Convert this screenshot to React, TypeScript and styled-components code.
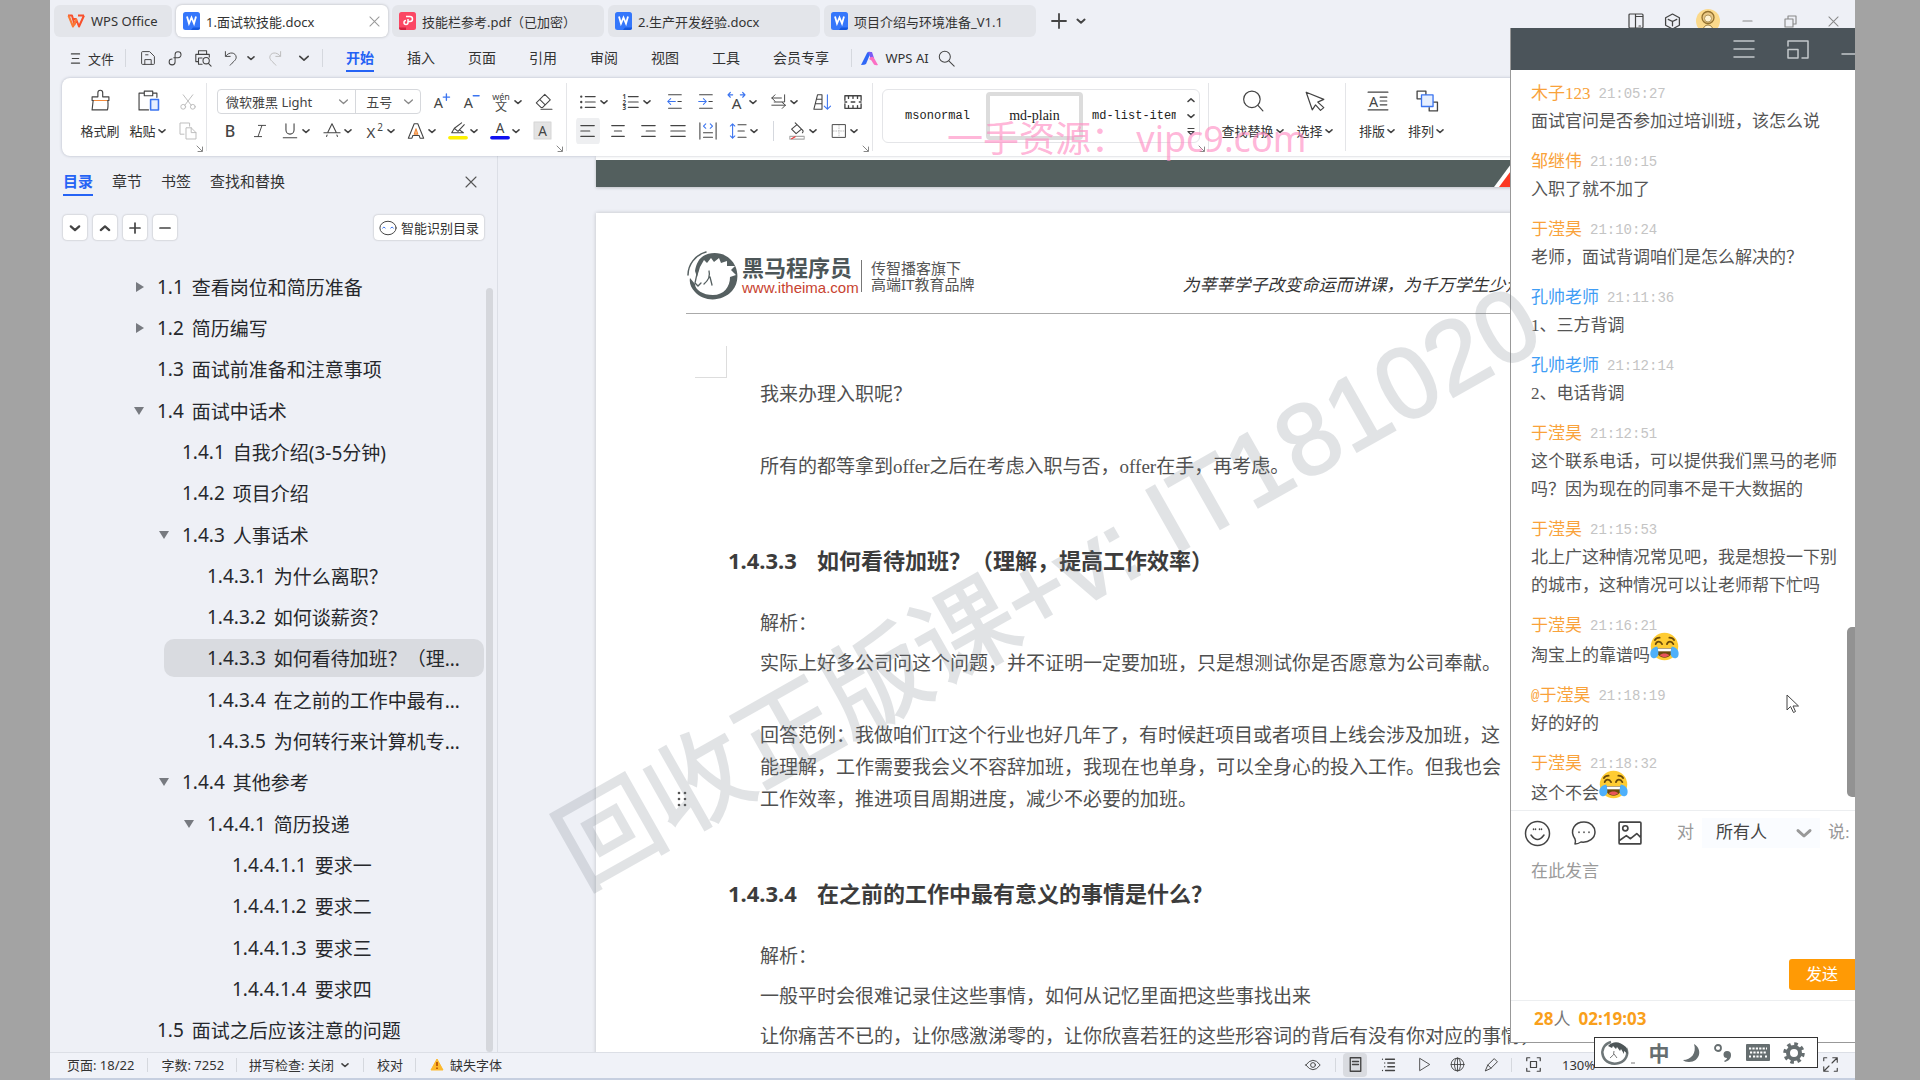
import React from "react";
import styled, { createGlobalStyle, css } from "styled-components";

const UI = `"Noto Sans", "Noto Sans CJK SC", sans-serif`;
const DOC = `"Liberation Serif", "Noto Sans CJK SC", serif`;

const Global = createGlobalStyle`
  * { box-sizing: border-box; }
  body { margin: 0; background: #a3a3a3; font-family: ${UI}; color: #333; }
  button, select, textarea { font: inherit; color: inherit; border: 0; background: none; padding: 0; margin: 0; }
  button { cursor: pointer; }
  h2, p, ul, ol { margin: 0; padding: 0; list-style: none; }
  svg { display: block; flex: none; overflow: visible; }
`;

const Desktop = styled.div`
  height: 100vh;
  padding: 0 65px 0 50px;
  background: #a3a3a3;
`;
const Window = styled.div`
  position: relative;
  display: flex;
  flex-direction: column;
  height: 100%;
  overflow: hidden;
  background: #eef0f6;
`;

/* ---------- icons ---------- */
type IconProps = { children?: React.ReactNode; w?: number; h?: number; box?: string; color?: string; sw?: number };
const Icon = ({ children, w = 20, h = w, box = "0 0 20 20", color = "#444", sw = 1.2 }: IconProps) => (
  <svg width={w} height={h} viewBox={box} fill="none" stroke={color} strokeWidth={sw} strokeLinecap="round" strokeLinejoin="round" aria-hidden="true">
    {children}
  </svg>
);
const Caret = ({ up = false, size = 10, color = "#444", sw = 1.6 }: { up?: boolean; size?: number; color?: string; sw?: number }) => (
  <Icon w={size} box="0 0 10 10" color={color} sw={sw}>
    <path d={up ? "M2 6.5 5 3.8 8 6.5" : "M2 3.8 5 6.5 8 3.8"} />
  </Icon>
);
const Cross = ({ size = 12, color = "#555" }: { size?: number; color?: string }) => (
  <Icon w={size} box="0 0 12 12" color={color} sw={1.1}><path d="M1 1 11 11M11 1 1 11" /></Icon>
);
const Letter = ({ x = 10, y = 16, size = 16, fill = "#444", weight = 400, t = "A" }: { x?: number; y?: number; size?: number; fill?: string; weight?: number; t?: string }) => (
  <text x={x} y={y} fontSize={size} fill={fill} stroke="none" fontWeight={weight} textAnchor="middle" fontFamily="Noto Sans, Noto Sans CJK SC, sans-serif">{t}</text>
);
const BLUE = "#3b74f0";
const WordMark = () => (
  <svg width="17" height="18" viewBox="0 0 17 18" aria-hidden="true">
    <rect width="17" height="18" rx="2.5" fill="#3577fb" />
    <path d="M8 18h6.500a2.500 2.500 0 0 0 2.500-2.500H10z" fill="#1557dd" />
    <path d="M4 4.500 6 11.500 8.500 5.500 11 11.500 13 4.500" fill="none" stroke="#fff" strokeWidth="1.800" />
  </svg>
);
const PdfMark = () => (
  <svg width="17" height="18" viewBox="0 0 17 18" aria-hidden="true">
    <rect width="17" height="18" rx="2.5" fill="#fb4764" />
    <path d="M0 15.500h7v2.500H2.500A2.500 2.500 0 0 1 0 15.500z" fill="#d3203f" />
    <path d="M7 4.500h4a2.300 2.300 0 0 1 0 5H8.500M9 7v3.500a2 2 0 1 1-2-2" fill="none" stroke="#fff" strokeWidth="1.500" />
  </svg>
);
const WpsMark = () => (
  <svg width="18" height="14" viewBox="0 0 18 14" aria-hidden="true">
    <path d="M1 1.500h4l2.500 9L9.500 5M17 1.500l-5 11L9 5H5.500M11 1.500h6" fill="none" stroke="#f8502c" strokeWidth="2" strokeLinejoin="round" />
    <path d="M1.500 1.500 6 12.500 9.500 5" fill="none" stroke="#fb7a35" strokeWidth="2" strokeLinejoin="round" />
  </svg>
);
const Laughing = styled.svg`
  display: inline-block;
  vertical-align: baseline;
  width: 29px;
  height: 29px;
  margin: -8px 0 0;
`;
const Joy = () => (
  <Laughing viewBox="0 0 36 36" role="img" aria-label="笑哭">
    <circle cx="18" cy="18" r="17" fill="#ffcc33" />
    <path d="M8 20h20c0 8-4 12-10 12S8 28 8 20z" fill="#6b4a0a" />
    <path d="M9.500 20.500h17v3.500h-17z" fill="#fff" />
    <path d="M12 29c3-3 9-3 12 0-3 3-9 3-12 0z" fill="#e8555a" />
    <path d="M7 15c1.500-4 6-4 8 0M21 15c1.500-4 6-4 8 0M6 10c1-2 3-3 6-3M30 10c-1-2-3-3-6-3" fill="none" stroke="#6b4a0a" strokeWidth="2.200" strokeLinecap="round" />
    <path d="M9 18C2 19-1 25 1 30c2 4 8 3 9-1 1-3 0-8-1-11zM27 18c7 1 10 7 8 12-2 4-8 3-9-1-1-3 0-8 1-11z" fill="#4fb0fa" />
  </Laughing>
);

/* ---------- title bar ---------- */
const TitleBar = styled.header`
  display: flex;
  align-items: center;
  height: 44px;
  padding: 0 0 2px 4px;
  flex: none;
`;
const TabList = styled.nav`
  display: flex;
  gap: 4px;
`;
const FileTab = styled.button<{ $w: number; $active?: boolean; $home?: boolean }>`
  display: flex;
  align-items: center;
  gap: 6px;
  width: ${(p) => p.$w}px;
  height: 32px;
  padding: 0 8px 0 ${(p) => (p.$home ? 13 : 7)}px;
  border-radius: 6px;
  font-size: 13px;
  white-space: nowrap;
  text-align: left;
  background: ${(p) => (p.$active ? "#fff" : "#e3e5ea")};
  box-shadow: ${(p) => (p.$active ? "0 0 3px rgba(0,0,0,.25)" : "none")};
  span { flex: 1; }
`;
const NewTab = styled.div`
  display: flex;
  gap: 8px;
  padding-left: 15px;
  button { display: flex; align-items: center; }
`;
const WindowControls = styled.div`
  display: flex;
  margin-left: auto;
`;
const Control = styled.button<{ $w: number }>`
  display: flex;
  justify-content: center;
  align-items: center;
  width: ${(p) => p.$w}px;
  height: 32px;
`;

/* ---------- menu ---------- */
const MenuRow = styled.div`
  display: flex;
  align-items: center;
  height: 28px;
  flex: none;
  padding-left: 18px;
`;
const MenuButton = styled.button<{ $w?: number }>`
  display: flex;
  align-items: center;
  justify-content: center;
  gap: 7px;
  width: ${(p) => (p.$w ? `${p.$w}px` : "auto")};
  height: 28px;
  font-size: 13px;
  white-space: nowrap;
`;
const Rule = styled.span<{ $m?: number; $h?: number }>`
  width: 1px;
  height: ${(p) => p.$h ?? 18}px;
  margin: 0 ${(p) => p.$m ?? 0}px;
  background: #d5d8de;
  flex: none;
`;
const MenuTabs = styled.nav`
  display: flex;
  gap: 33px;
  margin: 0 22px 0 20px;
`;
const MenuTab = styled.button<{ $active?: boolean }>`
  height: 28px;
  font-size: 14px;
  white-space: nowrap;
  border-bottom: 2px solid transparent;
  ${(p) => p.$active && css`color: #2563f5; font-weight: 700; border-color: #2563f5;`}
`;

/* ---------- ribbon ---------- */
const Ribbon = styled.section`
  display: flex;
  flex: none;
  height: 78px;
  margin: 6px 0 0 12px;
  background: #fff;
  border-radius: 8px 0 0 8px;
  box-shadow: 0 0 3px rgba(40, 50, 80, 0.3);
  z-index: 1;
`;
const Group = styled.div<{ $w?: number; $pad?: number }>`
  position: relative;
  display: flex;
  flex: none;
  width: ${(p) => (p.$w ? `${p.$w}px` : "auto")};
  padding: 6px 0 4px ${(p) => p.$pad ?? 0}px;
  &:not(:last-child)::after {
    content: "";
    position: absolute;
    right: 0;
    top: 5px;
    bottom: 5px;
    width: 1px;
    background: #e4e5e8;
  }
`;
const Launcher = styled.button`
  position: absolute;
  right: 3px;
  bottom: 3px;
`;
const Rows = styled.div`
  display: flex;
  flex-direction: column;
  gap: 2px;
  padding-top: 4px;
`;
const Row = styled.div<{ $gap?: number }>`
  display: flex;
  align-items: center;
  gap: ${(p) => p.$gap ?? 0}px;
  height: 27px;
`;
const Tool = styled.button<{ $drop?: boolean; $on?: boolean }>`
  display: flex;
  align-items: center;
  justify-content: center;
  gap: 2px;
  width: ${(p) => (p.$drop ? 42 : 30)}px;
  height: 26px;
  padding: 0 3px;
  background: ${(p) => (p.$on ? "#eeeff1" : "none")} content-box;
  border-radius: 5px;
`;
const BigTool = styled.button<{ $w: number }>`
  display: flex;
  flex-direction: column;
  align-items: center;
  justify-content: space-between;
  width: ${(p) => p.$w}px;
  height: 56px;
  padding-top: 6px;
  font-size: 13px;
  line-height: 18px;
  span { display: flex; align-items: center; gap: 1px; white-space: nowrap; }
`;
const FontBox = styled.div`
  display: flex;
  width: 204px;
  height: 25px;
  margin-right: 5px;
  margin-left: 2px;
  border: 1px solid #d6d8dc;
  border-radius: 4px;
`;
const Field = styled.label<{ $w: number }>`
  display: flex;
  align-items: center;
  width: ${(p) => p.$w}px;
  padding: 0 5px 0 8px;
  & + & { border-left: 1px solid #d6d8dc; padding-left: 10px; }
  select { appearance: none; flex: 1; min-width: 0; font-size: 13px; outline: 0; color: #444; }
`;
const Gallery = styled.div`
  display: flex;
  align-items: center;
  width: 318px;
  height: 54px;
  margin: 5px 0 0 9px;
  padding-left: 6px;
  border: 1px solid #e4e5e8;
  border-radius: 6px;
`;
const StyleCard = styled.button<{ $on?: boolean; $serif?: boolean }>`
  width: 97px;
  height: 48px;
  overflow: hidden;
  white-space: nowrap;
  border: ${(p) => (p.$on ? "4px solid #dcdcdc" : "0")};
  border-radius: 4px;
  font: ${(p) => (p.$serif ? `14px "Liberation Serif", serif` : `12px "Liberation Mono", monospace`)};
  color: #222;
`;
const ClipCard = styled(StyleCard)`
  width: 93px;
  padding-left: 9px;
  text-align: left;
`;
const GalleryArrows = styled.div`
  display: flex;
  flex-direction: column;
  justify-content: space-between;
  height: 50px;
  margin-left: 10px;
  padding: 4px 0;
`;

/* ---------- body ---------- */
const Body = styled.div`
  display: flex;
  flex: 1;
  min-height: 0;
`;
const Sidebar = styled.aside`
  position: relative;
  display: flex;
  flex-direction: column;
  width: 448px;
  flex: none;
  border-right: 1px solid #dcdfe6;
`;
const SideTabs = styled.div`
  display: flex;
  align-items: center;
  gap: 19px;
  height: 28px;
  margin: 12px 20px 0 13px;
  button:last-child { margin-left: auto; }
`;
const SideTab = styled.button<{ $active?: boolean }>`
  height: 28px;
  font-size: 15px;
  line-height: 26px;
  border-bottom: 2px solid transparent;
  ${(p) => p.$active && css`color: #2563f5; font-weight: 700; border-color: #2563f5;`}
`;
const SideTools = styled.div`
  display: flex;
  gap: 6px;
  margin: 19px 13px 0 13px;
`;
const Chip = styled.button`
  display: flex;
  align-items: center;
  justify-content: center;
  gap: 4px;
  min-width: 24px;
  height: 25px;
  background: #fff;
  border-radius: 4px;
  font-size: 13px;
  box-shadow: 0 0 2px rgba(0, 0, 0, 0.3);
  &:last-child { margin-left: auto; width: 110px; }
`;
const Tree = styled.ul`
  flex: 1;
  min-height: 0;
  display: grid;
  grid-auto-rows: 1fr;
  align-items: center;
  margin: 26px 13px 1px 13px;
`;
const Node = styled.li<{ $level: number; $active?: boolean }>`
  display: flex;
  align-items: center;
  height: 38px;
  margin-left: ${(p) => p.$level * 25 + (p.$active ? 51 : 0)}px;
  padding-left: ${(p) => (p.$active ? 19 : 70)}px;
  padding-right: 12px;
  border-radius: 10px;
  background: ${(p) => (p.$active ? "#d9dbe0" : "none")};
  color: #26282c;
  font-size: 19px;
  white-space: nowrap;
  min-width: 0;
`;
const Twist = styled.span`
  display: flex;
  width: 24px;
  flex: none;
`;
const NodeNo = styled.span`
  margin-right: 8px;
`;
const NodeTitle = styled.span`
  overflow: hidden;
  text-overflow: ellipsis;
`;
const Scroll = styled.span`
  position: absolute;
  right: 4px;
  top: 132px;
  bottom: 0;
  width: 7px;
  border-radius: 4px;
  background: #d5d7dc;
`;

/* ---------- document ---------- */
const Canvas = styled.main`
  flex: 1;
  min-width: 0;
  overflow: hidden;
  padding-left: 98px;
`;
const PageEnd = styled.div`
  position: relative;
  height: 31px;
  margin-bottom: 26px;
  border-top: 4px solid #fff;
  background: #535f5e;
  box-shadow: 0 1px 3px rgba(0, 0, 0, 0.2);
`;
const Flash = styled.svg`
  position: absolute;
  right: 325px;
  top: 0;
`;
const Page = styled.article`
  background: #fff;
  min-height: 1400px;
  padding-top: 38px;
  box-shadow: 0 0 4px rgba(0, 0, 0, 0.2);
`;
const PageHeader = styled.div`
  display: flex;
  align-items: center;
  height: 63px;
  margin-left: 90px;
  padding-bottom: 12px;
  border-bottom: 1px solid #aaa;
  white-space: nowrap;
`;
const Brand = styled.div`
  width: 112px;
  margin-left: 4px;
  strong { display: block; font-size: 22px; line-height: 24px; color: #4c5658; }
  a { display: block; font: 15px/18px "Liberation Sans", sans-serif; color: #c8432f; text-decoration: none; }
`;
const Tagline = styled.div`
  margin-left: 7px;
  padding-left: 9px;
  border-left: 1px solid #777;
  font-size: 15px;
  line-height: 16px;
  color: #555;
`;
const Slogan = styled.div`
  margin: 16px 0 0 208px;
  font: italic 17px/20px "Noto Sans CJK SC", sans-serif;
  color: #333;
`;
const MarginMark = styled.div`
  width: 32px;
  height: 32px;
  margin: 32px 0 0 99px;
  border: solid #ddd;
  border-width: 0 1px 1px 0;
`;
const Copy = styled.div`
  padding: 1px 0 0 164px;
  font: 19px/32px ${DOC};
  color: #505050;
  white-space: nowrap;
  p + p { margin-top: 8px; }
  p.spaced { margin-top: 40px; }
`;
const Heading = styled.h2`
  display: flex;
  gap: 20px;
  margin: 61px 0 32px -32px;
  font: 700 22px/32px ${UI};
  color: #3c3c3c;
`;
const Answer = styled.p`
  position: relative;
`;
const Handle = styled.svg`
  position: absolute;
  left: -83px;
  bottom: 9px;
`;

/* ---------- status bar ---------- */
const Status = styled.footer`
  display: flex;
  align-items: center;
  flex: none;
  height: 28px;
  padding: 0 0 2px 17px;
  border-top: 1px solid #dcdfe6;
  border-bottom: 2px solid #c6cfe0;
  font-size: 13px;
  background: #f0f2f8;
  white-space: nowrap;
`;
const StatusText = styled.button`
  display: flex;
  align-items: center;
  gap: 6px;
`;
const StatusTools = styled.div`
  display: flex;
  align-items: center;
  margin-left: auto;
  padding-right: 10px;
`;
const StatusTool = styled.button<{ $w: number; $on?: boolean }>`
  display: flex;
  justify-content: center;
  align-items: center;
  width: ${(p) => p.$w}px;
  height: 24px;
  border-radius: 4px;
  background: ${(p) => (p.$on ? "#d9dbe0" : "none")};
`;
const Zoom = styled.span`
  width: 266px;
  padding-left: 13px;
`;

/* ---------- chat window ---------- */
const Chat = styled.section`
  position: absolute;
  right: 0;
  top: 28px;
  bottom: 37px;
  z-index: 2;
  display: flex;
  flex-direction: column;
  width: 345px;
  background: #fff;
  border: solid #999;
  border-width: 0 0 1px 1px;
`;
const ChatBar = styled.div`
  display: flex;
  justify-content: flex-end;
  align-items: center;
  gap: 32px;
  height: 42px;
  flex: none;
  overflow: hidden;
  background: #4b545a;
`;
const Messages = styled.ol`
  position: relative;
  flex: 1;
  min-height: 0;
  overflow: hidden;
  padding: 10px 8px 0 20px;
  font: 17px/28px ${DOC};
  color: #555;
`;
const Message = styled.li`
  margin-bottom: 12px;
`;
const Who = styled.div<{ $teacher?: boolean }>`
  display: flex;
  color: ${(p) => (p.$teacher ? "#3f9df5" : "#f9a23a")};
  small { font: 14px/28px "Liberation Mono", monospace; }
  time { margin-left: 8px; font: 14px/28px "Liberation Mono", monospace; color: #c4c4c4; }
`;
const ChatScroll = styled.span`
  position: absolute;
  right: 0;
  top: 557px;
  width: 8px;
  height: 170px;
  border-radius: 5px 0 0 5px;
  background: #929292;
`;
const Compose = styled.div`
  display: flex;
  flex-direction: column;
  flex: none;
  border-top: 1px solid #eceef0;
  font: 17px/28px ${DOC};
  textarea { height: 104px; padding: 3px 20px; resize: none; outline: 0; color: #555; }
  textarea::placeholder { color: #9a9a9a; }
`;
const ComposeTools = styled.div`
  display: flex;
  align-items: center;
  height: 44px;
  padding-left: 13px;
  color: #999;
  > button { margin-right: 20px; }
`;
const Audience = styled.label`
  display: flex;
  align-items: center;
  gap: 8px;
  margin-left: 14px;
`;
const AudienceBox = styled.span`
  display: flex;
  align-items: center;
  width: 118px;
  height: 30px;
  padding: 0 6px 0 14px;
  background: #fafcff;
  select { appearance: none; flex: 1; min-width: 0; outline: 0; color: #444; }
`;
const Send = styled.button`
  align-self: flex-end;
  width: 66px;
  height: 31px;
  margin-bottom: 10px;
  background: #ff9a05;
  color: #fff;
  font-size: 16px;
  border-radius: 3px 0 0 3px;
`;
const ChatFoot = styled.div`
  display: flex;
  gap: 8px;
  height: 42px;
  padding-left: 23px;
  border-top: 1px solid #eceef0;
  font-size: 17px;
  line-height: 36px;
  color: #777;
  flex: none;
  b { color: #f9a01b; }
`;

/* ---------- overlays ---------- */
const Stamp = styled.div`
  position: absolute;
  left: 516px;
  top: 789px;
  z-index: 3;
  font: 102px/140px "Liberation Sans", "Noto Sans CJK SC", sans-serif;
  color: #6e7882;
  -webkit-text-stroke: 2px #6e7882;
  opacity: 0.2;
  white-space: nowrap;
  transform-origin: left center;
  transform: rotate(-29.5deg);
  pointer-events: none;
`;
const PinkNote = styled.div`
  position: absolute;
  left: 897px;
  top: 114px;
  z-index: 3;
  font-size: 36px;
  line-height: 50px;
  color: rgba(255, 140, 195, 0.65);
  white-space: nowrap;
  pointer-events: none;
`;
const Ime = styled.div`
  position: absolute;
  right: 37px;
  bottom: 12px;
  z-index: 4;
  display: flex;
  align-items: center;
  justify-content: space-between;
  width: 224px;
  height: 31px;
  padding: 0 12px 0 6px;
  background: #fff;
  border: 1px solid #333;
  font-size: 21px;
  line-height: 28px;
  font-weight: 700;
  color: #666e70;
  button { display: flex; }
`;
const Pointer = styled.svg`
  position: absolute;
  right: 55px;
  top: 694px;
  z-index: 4;
`;

const toc: [number, string, string, ("open" | "shut")?][] = [
  [0, "1.1", "查看岗位和简历准备", "shut"],
  [0, "1.2", "简历编写", "shut"],
  [0, "1.3", "面试前准备和注意事项"],
  [0, "1.4", "面试中话术", "open"],
  [1, "1.4.1", "自我介绍(3-5分钟)"],
  [1, "1.4.2", "项目介绍"],
  [1, "1.4.3", "人事话术", "open"],
  [2, "1.4.3.1", "为什么离职？"],
  [2, "1.4.3.2", "如何谈薪资？"],
  [2, "1.4.3.3", "如何看待加班？（理解，提高工作效率）"],
  [2, "1.4.3.4", "在之前的工作中最有意义的事情是什么？"],
  [2, "1.4.3.5", "为何转行来计算机专业？需要哪些准备"],
  [1, "1.4.4", "其他参考", "open"],
  [2, "1.4.4.1", "简历投递", "open"],
  [3, "1.4.4.1.1", "要求一"],
  [3, "1.4.4.1.2", "要求二"],
  [3, "1.4.4.1.3", "要求三"],
  [3, "1.4.4.1.4", "要求四"],
  [0, "1.5", "面试之后应该注意的问题"],
];

const chat: { who: string; at: string; text: string; teacher?: boolean; joy?: boolean; mention?: boolean }[] = [
  { who: "木子123", at: "21:05:27", text: "面试官问是否参加过培训班，该怎么说" },
  { who: "邹继伟", at: "21:10:15", text: "入职了就不加了" },
  { who: "于滢昊", at: "21:10:24", text: "老师，面试背调咱们是怎么解决的？" },
  { who: "孔帅老师", at: "21:11:36", text: "1、三方背调", teacher: true },
  { who: "孔帅老师", at: "21:12:14", text: "2、电话背调", teacher: true },
  { who: "于滢昊", at: "21:12:51", text: "这个联系电话，可以提供我们黑马的老师吗？因为现在的同事不是干大数据的" },
  { who: "于滢昊", at: "21:15:53", text: "北上广这种情况常见吧，我是想投一下别的城市，这种情况可以让老师帮下忙吗" },
  { who: "于滢昊", at: "21:16:21", text: "淘宝上的靠谱吗", joy: true },
  { who: "于滢昊", at: "21:18:19", text: "好的好的", mention: true },
  { who: "于滢昊", at: "21:18:32", text: "这个不会", joy: true },
];

const Lines = ({ a = [3, 17], b = [3, 17] }: { a?: number[]; b?: number[] }) => (
  <path d={`M${a[0]} 4H${a[1]}M${b[0]} 10H${b[1]}M${a[0]} 16H${a[1]}`} />
);

function TopBars() {
  return (
    <>
      <TitleBar>
        <TabList>
          <FileTab $w={118} $home><WpsMark /><span>WPS Office</span></FileTab>
          <FileTab $w={212} $active><WordMark /><span>1.面试软技能.docx</span><Cross size={11} color="#999" /></FileTab>
          <FileTab $w={212}><PdfMark /><span>技能栏参考.pdf（已加密）</span></FileTab>
          <FileTab $w={212}><WordMark /><span>2.生产开发经验.docx</span></FileTab>
          <FileTab $w={212}><WordMark /><span>项目介绍与环境准备_V1.1</span></FileTab>
        </TabList>
        <NewTab>
          <button aria-label="新建"><Icon w={16} box="0 0 16 16" sw={1.8}><path d="M8 1V15M1 8H15" /></Icon></button>
          <button aria-label="更多标签"><Caret size={12} /></button>
        </NewTab>
        <WindowControls>
          <Control $w={36} aria-label="侧栏"><Icon w={16} box="0 0 16 16"><path d="M2 1H14a1 1 0 0 1 1 1V14a1 1 0 0 1-1 1H2a1 1 0 0 1-1-1V2a1 1 0 0 1 1-1zM7.500 1V15M7.500 3.500H15M11 13H12.500" /></Icon></Control>
          <Control $w={36} aria-label="应用"><Icon w={17} box="0 0 16 16" sw={1.2}><path d="M8 1 14.500 4.500V11.500L8 15 1.500 11.500V4.500zM4 6 8 8 12 6M8 8V12" /></Icon></Control>
          <Control $w={36} aria-label="账户">
            <svg width="24" height="24" viewBox="0 0 24 24" aria-hidden="true">
              <circle cx="12" cy="12" r="12" fill="#fbd98b" />
              <circle cx="12" cy="8.500" r="6" fill="#e9c886" stroke="#93712f" strokeWidth="1.300" />
              <circle cx="12" cy="9.500" r="3.500" fill="#fff3d4" stroke="#a58646" strokeWidth=".8" />
              <path d="M7 22c0-8 10-8 10 0" fill="#fff3d4" stroke="#93712f" />
            </svg>
          </Control>
          <Control $w={43} aria-label="最小化"><Icon w={11} box="0 0 11 11" color="#888"><path d="M1 5H10" /></Icon></Control>
          <Control $w={43} aria-label="还原"><Icon w={13} box="0 0 13 13" color="#888" sw={1.1}><path d="M1 4H9V12H1zM4 4V1H12V9H9" /></Icon></Control>
          <Control $w={43} aria-label="关闭"><Cross color="#888" size={11} /></Control>
        </WindowControls>
      </TitleBar>
      <MenuRow>
        <MenuButton $w={48}><Icon w={11} box="0 0 11 12"><path d="M1 1H10M2 6H9M1 11H10" /></Icon>文件</MenuButton>
        <Rule $m={9} />
        <MenuButton $w={26} aria-label="保存"><Icon w={16}><path d="M2 3a1 1 0 0 1 1-1H12L18 8V17a1 1 0 0 1-1 1H3a1 1 0 0 1-1-1zM6 18V12H14V18M7 6H10" /></Icon></MenuButton>
        <MenuButton $w={28} aria-label="输出"><Icon w={17}><path d="M8 9H13a3.500 3.500 0 1 0-3.500-3.500V14A3.500 3.500 0 1 1 6 10.500" /></Icon></MenuButton>
        <MenuButton $w={28} aria-label="打印预览"><Icon w={18}><path d="M5 6V2H14V6M5 14H2V6H17V9M6 10H9M5 17V10M5 17H9" /><circle cx="13.500" cy="13" r="3.500" /><path d="M16 16 19 19" /></Icon></MenuButton>
        <MenuButton $w={44} aria-label="撤销"><Icon w={16}><path d="M3 2V8H9M3.500 7.500C8 1.500 16 3 16.500 9 16.500 13 12 15 9 19" /></Icon><Caret /></MenuButton>
        <MenuButton $w={28} aria-label="恢复"><Icon w={16} color="#bbb"><path d="M17 2V8H11M16.500 7.500C12 1.500 4 3 3.500 9 3.500 13 8 15 11 19" /></Icon></MenuButton>
        <MenuButton $w={30} aria-label="更多命令"><Caret size={14} sw={1.200} /></MenuButton>
        <Rule $m={3} />
        <MenuTabs>
          <MenuTab $active>开始</MenuTab><MenuTab>插入</MenuTab><MenuTab>页面</MenuTab><MenuTab>引用</MenuTab><MenuTab>审阅</MenuTab><MenuTab>视图</MenuTab><MenuTab>工具</MenuTab><MenuTab>会员专享</MenuTab>
        </MenuTabs>
        <Rule />
        <MenuButton $w={86}>
          <svg width="17" height="15" viewBox="0 0 17 15" aria-hidden="true">
            <path d="M0 14 6 2Q7 0 10 1L5 13Q4 14 0 14z" fill="#2f67f6" />
            <path d="M7 1 11 1 13 7 9.500 7z" fill="#7a5cf5" />
            <path d="M8 8Q11 4 13 7L17 14Q13 15 12 12 11 9 8 8z" fill="#fb6fc4" />
          </svg>
          WPS AI
        </MenuButton>
        <MenuButton aria-label="搜索"><Icon w={17}><circle cx="8" cy="8" r="6.500" /><path d="M13 13 19 19" /></Icon></MenuButton>
      </MenuRow>
    </>
  );
}

const Corner = () => (
  <Launcher aria-label="更多设置"><Icon w={8} box="0 0 8 8" color="#888" sw={1}><path d="M1 1 6 6M6.500 2V6.500H2" /></Icon></Launcher>
);

function RibbonBar() {
  return (
    <Ribbon>
      <Group $w={145} $pad={15}>
        <BigTool $w={46}><Icon w={21} sw={1.100}><path d="M2 6.500H7.500V2.500a2.300 2.300 0 0 1 4.600 0V6.500H18V10H2zM3 10 2 19H16.500Q17.500 17 17 10" /><path d="M4 10H16" stroke="#f08a3c" /></Icon><span>格式刷</span></BigTool>
        <BigTool $w={50}><Icon w={21} sw={1.100}><path d="M6 3H1V19H10M14 3H18V7M6 1H14V5.500H6z" /><path d="M12 9H19.500V19H12z" stroke={BLUE} fill="#e6efff" strokeWidth="1.500" /></Icon><span>粘贴<Caret /></span></BigTool>
        <Rows>
          <Row><Tool aria-label="剪切"><Icon w={16} color="#bbb"><path d="M4 1 14 14M16 1 6 14" /><circle cx="4" cy="16" r="3" /><circle cx="16" cy="16" r="3" /></Icon></Tool></Row>
          <Row><Tool aria-label="复制"><Icon w={16} color="#bbb"><path d="M5 14H0V0H12V4M8 6H14L20 12V20H8zM14 6V12H20" /></Icon></Tool></Row>
        </Rows>
        <Corner />
      </Group>
      <Group $w={360} $pad={8}>
        <Rows>
          <Row>
            <FontBox>
              <Field $w={138}><select aria-label="字体"><option>微软雅黑 Light</option></select><Caret size={13} color="#888" sw={1} /></Field>
              <Field $w={65}><select aria-label="字号"><option>五号</option></select><Caret size={13} color="#888" sw={1} /></Field>
            </FontBox>
            <Tool aria-label="增大字号"><Icon w={18}><Letter x={7} y={17} size={16} /><path d="M16 1V8M12.500 4.500H19.500" stroke={BLUE} strokeWidth="1.500" /></Icon></Tool>
            <Tool aria-label="减小字号"><Icon w={18}><Letter x={7} y={17} size={16} /><path d="M12.500 3H19" stroke={BLUE} strokeWidth="1.500" /></Icon></Tool>
            <Tool $drop aria-label="拼音指南"><Icon><Letter y={8} size={9} t="wén" /><Letter y={19} size={12} t="文" /></Icon><Caret /></Tool>
            <Tool aria-label="清除格式"><Icon w={17}><path d="M7 17 1.500 11.500 11.500 1.500 18 8 9 17zM5.500 7.500 12 14M7 19H20" /></Icon></Tool>
          </Row>
          <Row>
            <Tool aria-label="加粗"><Icon><Letter weight={500} y={16} size={16} t="B" /></Icon></Tool>
            <Tool aria-label="倾斜"><Icon w={16}><path d="M8 3H17M3 17H12M12.500 3 7.500 17" /></Icon></Tool>
            <Tool $drop aria-label="下划线"><Icon w={18}><path d="M5.500 2V9a4.500 4.500 0 0 0 9 0V2M2.500 17.500H17.500" /></Icon><Caret /></Tool>
            <Tool $drop aria-label="删除线"><Icon w={18}><path d="M10 2 5.500 11M10 2 14.500 11M4 16 4.500 14.500M16 16 15.500 14.500M1 12H19" /></Icon><Caret /></Tool>
            <Tool $drop aria-label="上标"><Icon><Letter x={7} y={17} size={15} t="X" /><Letter x={16} y={10} size={10} t="2" /></Icon><Caret /></Tool>
            <Tool $drop aria-label="文字效果"><Icon w={18}><path d="M1.500 18 8 2H12L18.500 18H14.500L13.500 15H6.500L5.500 18z" /><path d="M8 13.500 10 7.500 12 13.500z" stroke="#f08a3c" fill="#f9c08f" /></Icon><Caret /></Tool>
            <Tool $drop aria-label="突出显示"><Icon w={18}><path d="M3 12 6 7 10 10.500 17 3M6 7 14 1M3 12H16L12 9" /><path d="M1 17.500H19" stroke="#fdf000" strokeWidth="4" /></Icon><Caret /></Tool>
            <Tool $drop aria-label="字体颜色"><Icon w={18}><Letter y={12} size={15} /><path d="M1 17.500H19" stroke="#1010f0" strokeWidth="4" /></Icon><Caret /></Tool>
            <Tool aria-label="字符底纹"><Icon w={17}><rect width="20" height="20" fill="#e3e3e3" stroke="#d6d6d6" /><Letter y={16} size={16} /></Icon></Tool>
          </Row>
        </Rows>
        <Corner />
      </Group>
      <Group $w={306} $pad={6}>
        <Rows>
          <Row $gap={1}>
            <Tool $drop aria-label="项目符号"><Icon w={18}><path d="M7 4H18M7 10H18M7 16H18" /><path d="M2.500 4V4.010M2.500 10V10.010M2.500 16V16.010" strokeWidth="2.600" /></Icon><Caret /></Tool>
            <Tool $drop aria-label="编号"><Icon w={18}><path d="M7 4H18M7 10H18M7 16H18" /><Letter x={2.500} y={6.500} size={7} t="1" weight={700} /><Letter x={2.500} y={13} size={7} t="2" weight={700} /><Letter x={2.500} y={19} size={7} t="3" weight={700} /></Icon><Caret /></Tool>
            <Tool aria-label="减少缩进"><Icon w={17}><path d="M3 2H18M3 18H18M14 10H18" /><path d="M11 10H2M5.500 6.500 2 10 5.500 13.500" stroke={BLUE} /></Icon></Tool>
            <Tool aria-label="增加缩进"><Icon w={17}><path d="M3 2H18M3 18H18M14 10H18" /><path d="M2 10H11M7.500 6.500 11 10 7.500 13.500" stroke={BLUE} /></Icon></Tool>
            <Tool $drop aria-label="中文版式"><Icon w={19}><Letter y={18} size={16} /><path d="M1 3H6M14 3H19M3.500 .5 1 3 3.500 5.500M16.500 .5 19 3 16.500 5.500" stroke={BLUE} /></Icon><Caret /></Tool>
            <Tool $drop aria-label="换行"><Icon w={16}><path d="M5 1 1 5 5 9M1 5H13M17 1V10H4M1 14H18M14 10.500 18 14 14 18" /></Icon><Caret /></Tool>
            <Tool aria-label="排序"><Icon w={18}><path d="M1 18 5 2H10V18zM4 7H10M3 12H10" /><path d="M16 2V18M12.500 14.500 16 18 19.500 14.500" stroke={BLUE} /></Icon></Tool>
            <Tool aria-label="制表位"><Icon w={18}><path d="M1 8V3H19V8M1 12V17H19V12M5 3V6M10 3V6M15 3V6M5 17V14M10 17V14M15 17V14M1 10H3M17 10H19M8 10H12" strokeWidth="1.500" /></Icon></Tool>
          </Row>
          <Row>
            <Tool $on aria-label="左对齐"><Icon w={18}><Lines a={[2, 17]} b={[2, 12]} /></Icon></Tool>
            <Tool aria-label="居中"><Icon w={18}><Lines a={[3, 17]} b={[6, 14]} /></Icon></Tool>
            <Tool aria-label="右对齐"><Icon w={18}><Lines a={[3, 18]} b={[8, 18]} /></Icon></Tool>
            <Tool aria-label="两端对齐"><Icon w={18}><Lines a={[2, 18]} b={[2, 18]} /></Icon></Tool>
            <Tool aria-label="分散对齐"><Icon w={18}><path d="M1 1V19M19 1V19M5 12H15M5 17H15" /><path d="M7.500 2 5 4.500 7.500 7M12.500 2 15 4.500 12.500 7" stroke={BLUE} /></Icon></Tool>
            <Tool $drop aria-label="行距"><Icon w={18}><path d="M10 3H19M10 10H17M10 17H19" /><path d="M4 2V18M1.500 4.500 4 2 6.500 4.500M1.500 15.500 4 18 6.500 15.500" stroke={BLUE} /></Icon><Caret /></Tool>
            <Rule $m={8} $h={20} />
            <Tool $drop aria-label="底纹"><Icon w={18}><path d="M4 8 10 3 15 8 9 13zM10 3 8 1M15 8Q18 10 16 12" /><path d="M2 16H18V19H2z" stroke="#aaa" /><path d="M4 18.500 8 16.500" stroke="#e33" /></Icon><Caret /></Tool>
            <Tool $drop aria-label="边框"><Icon w={16}><path d="M2 2H18V18H2z" /><path d="M10 3V17M3 10H17" stroke="#bbb" strokeDasharray="1 2" /></Icon><Caret /></Tool>
          </Row>
        </Rows>
        <Corner />
      </Group>
      <Group $w={336}>
        <Gallery>
          <StyleCard>msonormal</StyleCard>
          <StyleCard $on $serif>md-plain</StyleCard>
          <ClipCard>md-list-item</ClipCard>
          <GalleryArrows><Caret up /><Caret /><Icon w={10} box="0 0 10 10"><path d="M2 1.500H8M2 4.500H8L5 7.500z" /></Icon></GalleryArrows>
        </Gallery>
        <Corner />
      </Group>
      <Group $w={137} $pad={6}>
        <BigTool $w={76}><Icon w={22} sw={1.100}><circle cx="9" cy="8.500" r="7.500" /><path d="M14.500 14 19 19" /></Icon><span>查找替换<Caret /></span></BigTool>
        <BigTool $w={48}><Icon w={22} sw={1.100}><path d="M2 2 18 8.500 12.500 11 18 16 15 18.500 10.500 13.500 7.500 18z" /></Icon><span>选择<Caret /></span></BigTool>
      </Group>
      <Group $pad={7}>
        <BigTool $w={49}><Icon w={22} sw={1.100}><path d="M1 2H19M12 6.500H18M12 10H18M12 13.500H18M1 18H19" /><Letter x={6} y={15} size={13} /></Icon><span>排版<Caret /></span></BigTool>
        <BigTool $w={49}><Icon w={22} sw={1.200}><path d="M5 8H1V1H9V4M16 11H19.500V19H12V16" /><path d="M5 4.500H15.500V15H5z" stroke={BLUE} fill="#e6efff" /></Icon><span>排列<Caret /></span></BigTool>
      </Group>
    </Ribbon>
  );
}

function Outline() {
  return (
    <Sidebar>
      <SideTabs>
        <SideTab $active>目录</SideTab><SideTab>章节</SideTab><SideTab>书签</SideTab><SideTab>查找和替换</SideTab>
        <button aria-label="关闭导航"><Cross /></button>
      </SideTabs>
      <SideTools>
        <Chip aria-label="展开"><Caret size={14} /></Chip>
        <Chip aria-label="收起"><Caret size={14} up /></Chip>
        <Chip aria-label="放大"><Icon w={12} box="0 0 12 12" sw={1.700}><path d="M6 1V11M1 6H11" /></Icon></Chip>
        <Chip aria-label="缩小"><Icon w={12} box="0 0 12 12" sw={1.700}><path d="M1 6H11" /></Icon></Chip>
        <Chip><Icon w={18} sw={1.100}><ellipse cx="10" cy="10" rx="9" ry="7.500" /><path d="M4 10Q5.500 7.500 7 10M13 10Q14.500 7.500 16 10" stroke={BLUE} /></Icon>智能识别目录</Chip>
      </SideTools>
      <Tree>
        {toc.map(([level, no, title, state]) => (
          <Node key={no} $level={level} $active={no === "1.4.3.3"}>
            <Twist>
              {state && (
                <svg width="12" height="12" viewBox="0 0 12 12" aria-hidden="true">
                  <path d={state === "open" ? "M1 2H11L6 10z" : "M3 1V11L11 6z"} fill="#777a80" />
                </svg>
              )}
            </Twist>
            <NodeNo>{no}</NodeNo>
            <NodeTitle>{title}</NodeTitle>
          </Node>
        ))}
      </Tree>
      <Scroll />
    </Sidebar>
  );
}

function Document() {
  return (
    <Canvas>
      <PageEnd>
        <Flash width="40" height="27" viewBox="0 0 40 27" aria-hidden="true"><path d="M4 27 24 0H40V27z" fill="#fff" /><path d="M9 27 29 0H40V27z" fill="#fb3822" /></Flash>
      </PageEnd>
      <Page>
        <PageHeader>
          <svg width="52" height="50" viewBox="0 0 52 50" aria-hidden="true">
            <path fillRule="evenodd" fill="#566061" d="M16 6C22 1 36 0 44 8 53 16 54 31 46 40 36 51 18 51 9 41 5 37 3 32 4 27L9 33C9 39 17 44 27 44 38 44 44 36 44 26L50 24 45 19 49 15 41 15 41 10 35 12 33 7 28 11 25 7 21 12 18 9 14 16 11 26 9 20C10 14 12 9 16 6z" />
            <path d="M20 1C9 4 2 14 2 24" fill="none" stroke="#566061" strokeWidth="1.500" strokeLinecap="round" />
            <path d="M12 18 9 32 12 35 15 32M23 20Q25 27 18 33M24 26 26 34" fill="none" stroke="#566061" strokeWidth="1.300" strokeLinecap="round" />
          </svg>
          <Brand><strong>黑马程序员</strong><a href="#itheima">www.itheima.com</a></Brand>
          <Tagline>传智播客旗下<br />高端IT教育品牌</Tagline>
          <Slogan>为莘莘学子改变命运而讲课，为千万学生少走</Slogan>
        </PageHeader>
        <MarginMark />
        <Copy>
          <p>我来办理入职呢？</p>
          <p className="spaced">所有的都等拿到offer之后在考虑入职与否，offer在手，再考虑。</p>
          <Heading><span>1.4.3.3</span>如何看待加班？（理解，提高工作效率）</Heading>
          <p>解析：</p>
          <p>实际上好多公司问这个问题，并不证明一定要加班，只是想测试你是否愿意为公司奉献。</p>
          <Answer className="spaced">
            回答范例：我做咱们IT这个行业也好几年了，有时候赶项目或者项目上线会涉及加班，这<br />
            能理解，工作需要我会义不容辞加班，我现在也单身，可以全身心的投入工作。但我也会<br />
            工作效率，推进项目周期进度，减少不必要的加班。
            <Handle width="10" height="16" viewBox="0 0 10 16" aria-hidden="true">
              {[2, 8, 14].map((y) => <g key={y} fill="#555"><circle cx="2" cy={y} r="1.300" /><circle cx="8" cy={y} r="1.300" /></g>)}
            </Handle>
          </Answer>
          <Heading><span>1.4.3.4</span>在之前的工作中最有意义的事情是什么？</Heading>
          <p>解析：</p>
          <p>一般平时会很难记录住这些事情，如何从记忆里面把这些事找出来</p>
          <p>让你痛苦不已的，让你感激涕零的，让你欣喜若狂的这些形容词的背后有没有你对应的事情，</p>
        </Copy>
      </Page>
    </Canvas>
  );
}

function StatusBar() {
  return (
    <Status>
      <StatusText>页面: 18/22</StatusText><Rule $m={13} $h={14} />
      <StatusText>字数: 7252</StatusText><Rule $m={12} $h={14} />
      <StatusText>拼写检查: 关闭<Caret /></StatusText><Rule $m={13} $h={14} />
      <StatusText>校对</StatusText><Rule $m={12} $h={14} />
      <StatusText>
        <svg width="16" height="13" viewBox="8 0 16 13" aria-hidden="true"><path d="M17 1 23 12H11z" fill="#fdb92c" stroke="#fdb92c" strokeLinejoin="round" /><path d="M17 4V8M17 9.500V11" stroke="#b34a00" strokeWidth="1.600" /></svg>
        缺失字体
      </StatusText>
      <StatusTools>
        <StatusTool $w={31} aria-label="护眼"><Icon w={16}><path d="M1 10Q10-2 19 10 10 22 1 10z" /><circle cx="10" cy="10" r="3" /></Icon></StatusTool>
        <Rule $m={7} $h={14} />
        <StatusTool $w={24} $on aria-label="页面视图"><Icon w={15}><path d="M3 1H17V19H3zM6 6H14M6 10H14" strokeWidth="1.800" /></Icon></StatusTool>
        <StatusTool $w={42} aria-label="大纲"><Icon w={15}><path d="M6 3H18M9 8H18M9 13H18M6 18H18M2 3V3.010M5 8V8.010M5 13V13.010M2 18V18.010" strokeWidth="1.700" /></Icon></StatusTool>
        <StatusTool $w={30} aria-label="阅读"><Icon w={15}><path d="M4 2 17 10 4 18z" /></Icon></StatusTool>
        <StatusTool $w={37} aria-label="网页视图"><Icon w={15}><circle cx="10" cy="10" r="8.500" /><ellipse cx="10" cy="10" rx="4" ry="8.500" /><path d="M1.500 10H18.500M10 1.500V18.500" /></Icon></StatusTool>
        <StatusTool $w={30} aria-label="书写"><Icon w={16}><path d="M3 17 6 10 14 2 18 6 10 14zM6 10 10 14" /></Icon></StatusTool>
        <Rule $m={5} $h={14} />
        <StatusTool $w={32} aria-label="聚焦"><Icon w={15}><path d="M1 5V1H5M15 1H19V5M19 15V19H15M5 19H1V15M6 6H14V14H6z" strokeWidth="1.600" /></Icon></StatusTool>
        <Zoom>130%</Zoom>
        <StatusTool $w={30} aria-label="全屏"><Icon w={15} sw={1.500}><path d="M13 1H19V7M19 1 12 8M7 19H1V13M1 19 8 12M1 5V1H5M19 15V19H15" /></Icon></StatusTool>
      </StatusTools>
    </Status>
  );
}

function ChatWindow() {
  return (
    <Chat>
      <ChatBar>
        <button aria-label="菜单"><Icon w={22} box="0 0 22 20" color="#c3c8cb" sw={1.500}><path d="M1 2H21M1 10H21M1 18H21" /></Icon></button>
        <button aria-label="小窗"><Icon w={22} h={19} box="0 0 22 19" color="#c3c8cb" sw={1.500}><path d="M1 6V1H21V18H15M1 9.500H11V18H1z" /></Icon></button>
        <button aria-label="最小化"><Icon w={14} h={14} box="0 0 14 14" color="#c3c8cb" sw={1.500}><path d="M1 12H14" /></Icon></button>
      </ChatBar>
      <Messages>
        {chat.map((m) => (
          <Message key={m.at}>
            <Who $teacher={m.teacher}>{m.mention && <small>@</small>}{m.who}<time>{m.at}</time></Who>
            <div>{m.text}{m.joy && <Joy />}</div>
          </Message>
        ))}
        <ChatScroll />
      </Messages>
      <Compose>
        <ComposeTools>
          <button aria-label="表情"><Icon w={27} box="0 0 27 27" sw={1.500}><circle cx="13.500" cy="13.500" r="12" /><path d="M7 15Q13.500 24 20 15M9.500 9V9.500M11.500 9V9.500M15.500 9V9.500M17.500 9V9.500" /></Icon></button>
          <button aria-label="快捷语"><Icon w={26} box="0 0 26 26" sw={1.500}><path d="M4 24Q5 21 4 19C-2 10 4 2 13 2 20 2 24 7 24 12 24 18 18 23 10 22Q7 24 4 24zM8 12V12.500M13 12V12.500M18 12V12.500" /></Icon></button>
          <button aria-label="图片"><Icon w={26} box="0 0 25 25" sw={1.600}><path d="M3 2H22a1 1 0 0 1 1 1V22a1 1 0 0 1-1 1H3a1 1 0 0 1-1-1V3a1 1 0 0 1 1-1zM2 20 9 15 13 18 19 13 23 17" /><circle cx="8" cy="8" r="2.500" /></Icon></button>
          <Audience>对<AudienceBox><select aria-label="发送对象"><option>所有人</option></select><Caret size={20} color="#999" sw={1.500} /></AudienceBox>说:</Audience>
        </ComposeTools>
        <textarea aria-label="发言" placeholder="在此发言" />
        <Send>发送</Send>
      </Compose>
      <ChatFoot><span><b>28</b>人</span><b>02:19:03</b></ChatFoot>
    </Chat>
  );
}

export default function App() {
  return (
    <Desktop>
      <Global />
      <Window>
        <TopBars />
        <RibbonBar />
        <Body><Outline /><Document /></Body>
        <StatusBar />
        <ChatWindow />
        <Stamp>回收正版课+v: IT181020</Stamp>
        <PinkNote>一手资源： vipc9.com</PinkNote>
        <Pointer width="14" height="20" viewBox="0 0 14 20" aria-hidden="true"><path d="M1 1V16L4.500 12.500 7.500 18.500 9.500 17.500 7 12H12.500z" fill="#fff" stroke="#444" /></Pointer>
        <Ime>
          <button aria-label="输入法">
            <svg width="34" height="26" viewBox="0 0 34 26" aria-hidden="true"><path d="M10 2C3 4 0 10 2 16 4 22 11 25 18 23 25 21 28 14 25 8" fill="none" stroke="#6e7678" strokeWidth="2.500" /><path d="M7 6Q15-2 25 7L27 14 23 11 23 14 20 9 19 11 16 7 15 9 12 6 11 8z" fill="#4e5658" /><path d="M13 11Q14 15 9 18M13 14 16 18M30 23H34" fill="none" stroke="#777" /></svg>
          </button>
          <button>中</button>
          <svg width="18" height="20" viewBox="0 0 18 20" aria-hidden="true"><path d="M11 1C20 6 17 19 6 19 3 19 1 18 0 17 8 17 14 10 11 1z" fill="#666e70" /></svg>
          <svg width="18" height="20" viewBox="0 0 18 20" aria-hidden="true"><circle cx="4" cy="5" r="3" fill="none" stroke="#666e70" strokeWidth="1.800" /><path d="M13 8a4 4 0 0 1 4 4c0 4-3 6-6 7l-1-1c2-1 3-2 3-3a3.500 3.500 0 0 1 0-7z" fill="#666e70" /></svg>
          <svg width="24" height="17" viewBox="0 0 24 17" aria-hidden="true"><rect width="24" height="17" rx="1" fill="#666e70" /><path d="M3 4.500H21M4 8.500H21M3 12.500H5M7 12.500H17M19 12.500H21" stroke="#fff" strokeWidth="2" strokeDasharray="2.200 1.200" /></svg>
          <svg width="22" height="22" viewBox="0 0 22 22" aria-hidden="true"><circle cx="11" cy="11" r="6" fill="none" stroke="#666e70" strokeWidth="4" /><circle cx="11" cy="11" r="9" fill="none" stroke="#666e70" strokeWidth="3.500" strokeDasharray="3.530 3.530" /></svg>
        </Ime>
      </Window>
    </Desktop>
  );
}
